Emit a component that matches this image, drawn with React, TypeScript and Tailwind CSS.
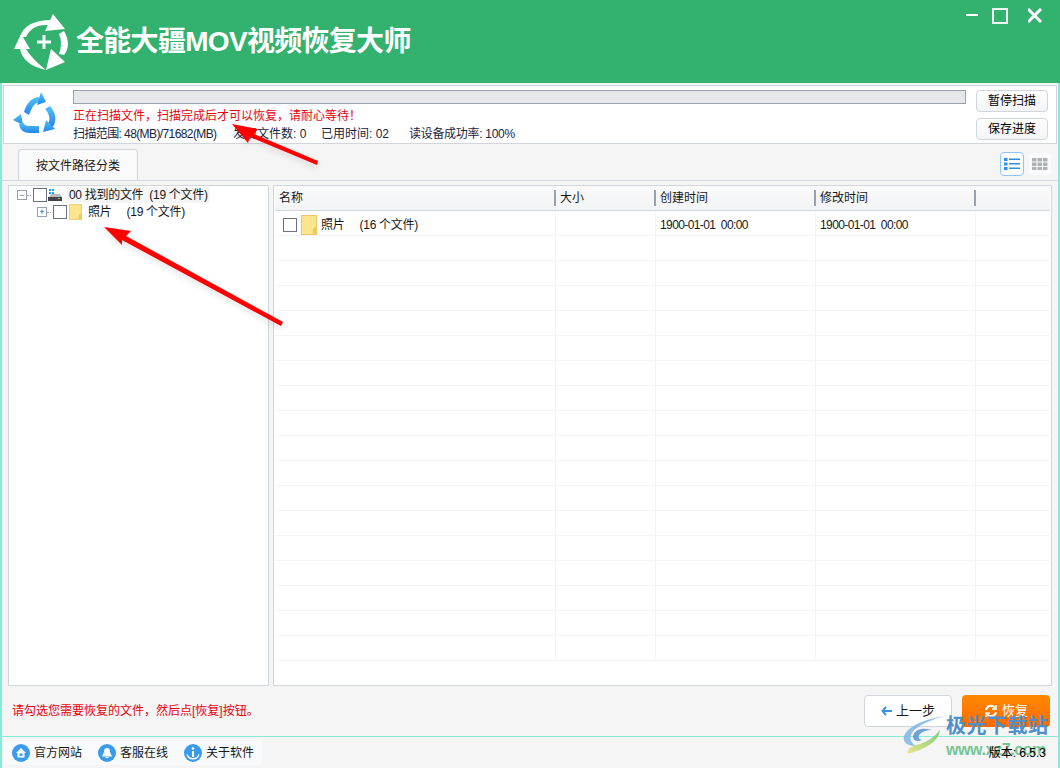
const rows = Array.from({ length: 18 }, (_, i) => i);
const columns = "grid shrink-0 grid-cols-[281px_100px_160px_160px_1fr]";

function Box({ className = "" }: { className?: string }) {
  return <span className={`block size-3.5 shrink-0 border border-gray-500 bg-white ${className}`} />;
}

function Folder({ small }: { small?: boolean }) {
  return (
    <svg width={small ? 13 : 16} height={small ? 16 : 20} viewBox="0 0 16 20" className="shrink-0">
      <rect x="0.5" y="0.5" width="15" height="19" fill="#fde58f" stroke="#e8c867" />
      <path d="M12 19.500v-6l3.500-2v8z" fill="#eec95c" />
    </svg>
  );
}

function WhiteLogo() {
  return (
    <svg width="56" height="56" viewBox="6 7 56 56" className="shrink-0" fill="#fff">
      <path d="M12 30Q17 13 44 13L40 18Q24 17 18 30z" />
      <path d="M45 7L57 22L37 24z" />
      <path d="M56 24Q64 38 56 48L51 47Q55 36 51 27z" />
      <path d="M43 42L57 55L38 63z" />
      <path d="M13 27L6 42H22z" />
      <path d="M12 42Q15 58 38 63Q24 52 18 42z" />
      <path d="M36 28v14M29 35h14" stroke="#fff" strokeWidth="3" />
    </svg>
  );
}

function BlueRecycle() {
  return (
    <svg width="45" height="44" viewBox="6 6 45 44" className="shrink-0">
      <defs>
        <linearGradient id="rec" x1="0" y1="0" x2="0" y2="1">
          <stop offset="0" stopColor="#52c2fa" />
          <stop offset="1" stopColor="#2587e6" />
        </linearGradient>
      </defs>
      <g fill="url(#rec)">
        <path d="M18 25Q22 11 33 10V15Q27 16 23 28z" />
        <path d="M35 5L40 15L31 18z" />
        <path d="M44 19Q53 30 47 40L42 37Q46 30 39 22z" />
        <path d="M37 45L40 33L49 42z" />
        <path d="M7 33L15 27L17 38z" />
        <path d="M13 37Q14 46 24 46H33V39H24Q18 39 17 35z" />
      </g>
    </svg>
  );
}

function ListIcon({ grid }: { grid?: boolean }) {
  if (grid) {
    return (
      <svg width="16" height="12" viewBox="0 0 16 12" fill="#aeb2b6">
        {[0, 4.5, 9].map((y) =>
          [0, 5.5, 11].map((x) => <rect key={`${x}-${y}`} x={x} y={y} width="4.5" height="3.5" />),
        )}
      </svg>
    );
  }
  return (
    <svg width="16" height="12" viewBox="0 0 16 12" fill="#2a8ee8">
      {[0, 4.5, 9].map((y) => (
        <g key={y}>
          <rect x="0" y={y} width="3.500" height="3" />
          <rect x="5" y={y + 0.5} width="11" height="1.500" />
        </g>
      ))}
    </svg>
  );
}

function CircleIcon({ kind }: { kind: string }) {
  return (
    <svg width="18" height="18" viewBox="0 0 18 18" className="shrink-0">
      <circle cx="9" cy="9" r="9" fill="#3a9bec" />
      {kind === "home" && <path d="M9 4l5 5h-1.500v4.500h-7V9H4zM7.500 9.500v2.500h3V9.500z" fill="#fff" fillRule="evenodd" />}
      {kind === "bell" && <path d="M9 4q3 0 3 4l2 4.500H4L6 8q0-4 3-4zM7.500 13h3v1h-3z" fill="#fff" />}
      {kind === "info" && (
        <g fill="#fff">
          <circle cx="9" cy="4.500" r="1.300" />
          <rect x="8" y="7" width="2" height="6" />
          <path d="M3.500 10q1 4 5.500 4t5.500-4l1 .5q-1 5-6.500 5T2.500 10.500z" />
        </g>
      )}
    </svg>
  );
}

function SideButton({ label }: { label: string }) {
  return (
    <button className="h-5.5 w-18 rounded-sm border border-gray-300 bg-gradient-to-b from-white to-gray-100 text-xs text-black">
      {label}
    </button>
  );
}

export default function App() {
  return (
    <div className="relative flex h-screen w-full flex-col overflow-hidden bg-neutral-100 font-['Liberation_Sans','Noto_Sans_CJK_SC',sans-serif] text-xs text-neutral-900">
      {/* title bar */}
      <header className="flex h-[83px] shrink-0 justify-between bg-[#33b16f] pl-3.5 pr-4 text-white">
        <div className="flex items-center gap-1.5">
          <WhiteLogo />
          <h1 className="text-[28px] font-bold tracking-tight">全能大疆MOV视频恢复大师</h1>
        </div>
        <div className="flex items-start pt-2">
          <span className="mt-1.5 block h-0.5 w-3 bg-white" />
          <span className="ml-3.5 block size-4 border-2 border-neutral-100" />
          <svg width="16" height="16" viewBox="0 0 16 16" stroke="#fff" strokeWidth="3" className="ml-5">
            <path d="M0 1l13 13M13 1L0 14" />
          </svg>
        </div>
      </header>

      <div className="flex min-h-0 flex-1 flex-col border-x-2 border-[#86ecd6]">
        {/* scan status */}
        <section className="mx-px mt-0.5 flex h-[59px] shrink-0 items-center border border-gray-300 bg-white pl-2 pr-2">
          <BlueRecycle />
          <div className="ml-4 flex h-full min-w-0 flex-1 flex-col pt-1">
            <div className="h-3.5 shrink-0 border border-gray-400 bg-gray-200" />
            <p className="mt-1 text-red-600">正在扫描文件，扫描完成后才可以恢复，请耐心等待！</p>
            <div className="mt-0.5 flex whitespace-nowrap text-[#17233f]">
              <span className="w-40 tracking-tighter">扫描范围: 48(MB)/71682(MB)</span>
              <span className="w-22">发现文件数: 0</span>
              <span className="w-22">已用时间: 02</span>
              <span className="tracking-tight">读设备成功率: 100%</span>
            </div>
          </div>
          <div className="ml-2.5 flex flex-col gap-1.5">
            <SideButton label="暂停扫描" />
            <SideButton label="保存进度" />
          </div>
        </section>

        {/* tabs */}
        <div className="flex h-9 shrink-0 items-end justify-between pl-4 pr-1.5">
          <div className="-mb-px flex h-8 w-30 items-center justify-center rounded-t-sm border border-b-0 border-gray-300 bg-neutral-50">
            按文件路径分类
          </div>
          <div className="mb-1 flex gap-1">
            <span className="flex h-6 w-6 items-center justify-center rounded-sm border border-blue-300 bg-white">
              <ListIcon />
            </span>
            <span className="flex h-6 w-6 items-center justify-center rounded-sm border border-gray-100 bg-neutral-50">
              <ListIcon grid />
            </span>
          </div>
        </div>

        {/* panels */}
        <div className="flex h-[506px] shrink-0 gap-1 border-t border-gray-300 px-1.5 pt-1">
          <aside className="w-[261px] shrink-0 border border-gray-300 bg-white pl-2">
            <div className="flex h-4.5 items-center">
              <span className="flex size-2.5 items-center justify-center border border-gray-400 text-[9px] leading-none text-gray-500">−</span>
              <span className="w-1 border-t border-dotted border-gray-400" />
              <Box className="ml-0.5" />
              <svg width="16" height="16" viewBox="0 0 16 16" className="shrink-0">
                <path d="M2 2h2v2H2zM5 2h2v2H5zM2 5h2v2H2zM5 5h2v2H5z" fill="#1e9bef" />
                <path d="M2 10l2-3h9l2 3z" fill="#bbb" />
                <rect x="1" y="10" width="14" height="4" fill="#444" />
                <rect x="11" y="11" width="2" height="1" fill="#6c6" />
              </svg>
              <span className="ml-1 bg-neutral-100 px-0.5 whitespace-pre tracking-tight">00 找到的文件  (19 个文件)</span>
            </div>
            <div className="-mt-px flex h-4.5 items-center pl-5">
              <span className="flex size-2.5 items-center justify-center border border-gray-400 text-[9px] leading-none text-blue-900">+</span>
              <span className="w-1 border-t border-dotted border-gray-400" />
              <Box className="ml-0.5" />
              <span className="ml-0.5"><Folder small /></span>
              <span className="ml-1.5 whitespace-pre tracking-tight">照片     (19 个文件)</span>
            </div>
          </aside>

          <div className="flex min-w-0 flex-1 flex-col border border-gray-300 bg-white px-px">
            <div className={`${columns} h-[25px] border-b border-gray-300 bg-gradient-to-b from-neutral-50 to-gray-100`}>
              {["名称", "大小", "创建时间", "修改时间", ""].map((h) => (
                <div key={h} className="flex items-center justify-between pl-1">
                  {h}
                  {h && <span className="h-4 w-0.5 bg-gray-400" />}
                </div>
              ))}
            </div>
            {rows.map((i) => (
              <div key={i} className={`${columns} h-[25px] border-b border-gray-100`}>
                <div className="flex items-center border-r border-gray-100 pl-2 pr-1 pt-1">
                  {i === 0 && (
                    <>
                      <Box className="mr-1" />
                      <Folder />
                      <span className="ml-1 whitespace-pre tracking-tight">照片     (16 个文件)</span>
                    </>
                  )}
                </div>
                <div className="border-r border-gray-100" />
                <div className="flex items-center border-r border-gray-100 pl-1 pt-1 tracking-tighter whitespace-pre">{i === 0 && "1900-01-01  00:00"}</div>
                <div className="flex items-center border-r border-gray-100 pl-1 pt-1 tracking-tighter whitespace-pre">{i === 0 && "1900-01-01  00:00"}</div>
                <div />
              </div>
            ))}
          </div>
        </div>

        {/* actions */}
        <div className="flex h-[50px] shrink-0 items-center justify-between pl-2.5 pr-2">
          <p className="text-red-600">请勾选您需要恢复的文件，然后点[恢复]按钮。</p>
          <div className="flex gap-2.5">
            <button className="flex h-8 w-22 items-center justify-center gap-1 rounded-sm border border-gray-300 bg-white text-[13px]">
              <svg width="11" height="10" viewBox="0 0 11 10" fill="none" stroke="#3a93e4" strokeWidth="2">
                <path d="M5 1L1.500 5 5 9M2 5h9" />
              </svg>
              上一步
            </button>
            <button className="flex h-8 w-22 items-center justify-center gap-1 rounded-sm bg-gradient-to-b from-orange-400 to-orange-500 text-[13px] text-white">
              <svg width="14" height="14" viewBox="0 0 14 14" fill="none" stroke="#fff" strokeWidth="2">
                <path d="M2 6a5 5 0 0 1 9-2M12 8a5 5 0 0 1-9 2" />
                <path d="M12 1v4H8M2 13V9h4" strokeWidth="1.500" />
              </svg>
              恢复
            </button>
          </div>
        </div>

        {/* status bar */}
        <footer className="flex min-h-0 flex-1 items-center justify-between border-t border-[#86ecd6] pl-0.5 pr-3">
          <div className="flex h-6 items-center gap-4 rounded-sm bg-slate-50 pl-2 pr-2">
            {[
              ["home", "官方网站"],
              ["bell", "客服在线"],
              ["info", "关于软件"],
            ].map(([k, t]) => (
              <span key={k} className="flex items-center gap-1">
                <CircleIcon kind={k} />
                {t}
              </span>
            ))}
          </div>
          <span className="relative z-10 text-black">版本: 6.5.3</span>
        </footer>
      </div>

      {/* red arrows drawn on top of the capture */}
      <svg className="pointer-events-none absolute inset-0 drop-shadow-md" width="1060" height="768">
        <g fill="#f00">
          <path d="M232 124L258 129L254 134L318 161L317 165L250 137L248 143z" />
          <path d="M104 227L131 231L126 236L283 322L281 326L122 240L122 245z" />
        </g>
      </svg>

      {/* site watermark */}
      <div className="pointer-events-none absolute bottom-2.5 right-2.5 flex items-start gap-0.5">
        <svg width="42" height="38" viewBox="0 0 42 38" className="shrink-0 opacity-80">
          <defs>
            <linearGradient id="swirl" x1="1" y1="0" x2="0" y2="1">
              <stop offset="0" stopColor="#5fc46a" />
              <stop offset="1" stopColor="#eae06a" />
            </linearGradient>
          </defs>
          <path d="M42 0Q8 6 2 20Q0 30 14 30Q4 24 12 14Q22 6 42 0z" fill="#79b4e4" />
          <path d="M30 14Q14 10 11 20Q11 27 20 24Q14 22 18 18Q22 14 30 14z" fill="#4d8fd0" />
          <path d="M38 14Q36 30 5 38Q6 30 18 28Q30 24 38 14z" fill="url(#swirl)" />
        </svg>
        <div className="flex w-26 flex-col">
          <span className="text-xl leading-5 font-bold tracking-wide text-[#4f8fca]">极光下载站</span>
          <span className="mt-1.5 text-base leading-4 font-bold tracking-tight text-[#72c795]">www.xz7.com</span>
        </div>
      </div>
    </div>
  );
}
